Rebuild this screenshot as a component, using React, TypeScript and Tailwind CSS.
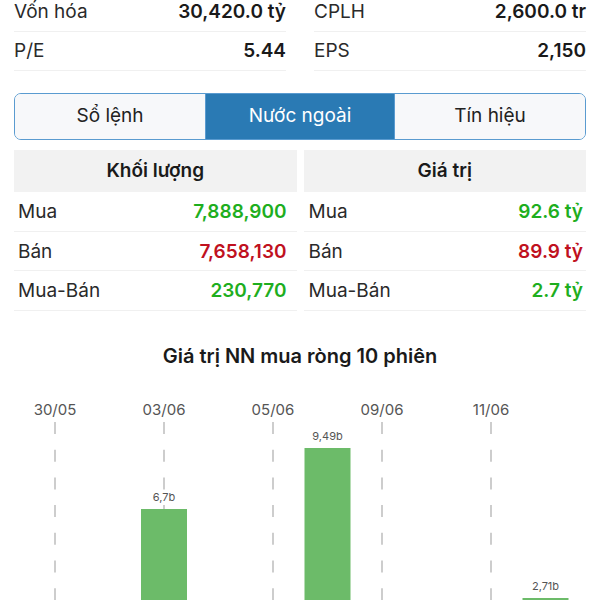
import React from "react";

type Pair = { label: string; value: string };

const topRows: Pair[][] = [
  [
    { label: "Vốn hóa", value: "30,420.0 tỷ" },
    { label: "CPLH", value: "2,600.0 tr" },
  ],
  [
    { label: "P/E", value: "5.44" },
    { label: "EPS", value: "2,150" },
  ],
];

type Row = { label: string; value: string; tone: "up" | "down" };

const volumeRows: Row[] = [
  { label: "Mua", value: "7,888,900", tone: "up" },
  { label: "Bán", value: "7,658,130", tone: "down" },
  { label: "Mua-Bán", value: "230,770", tone: "up" },
];

const valueRows: Row[] = [
  { label: "Mua", value: "92.6 tỷ", tone: "up" },
  { label: "Bán", value: "89.9 tỷ", tone: "down" },
  { label: "Mua-Bán", value: "2.7 tỷ", tone: "up" },
];

const tabs = ["Sổ lệnh", "Nước ngoài", "Tín hiệu"];

const StatTable: React.FC<{ title: string; rows: Row[]; right?: boolean }> = ({ title, rows, right }) => (
  <div>
    <div className="flex h-[42px] items-center justify-center bg-[#f2f2f2] text-[19px] font-semibold text-[#1a1a1a]">
      {title}
    </div>
    {rows.map((r) => (
      <div
        key={r.label}
        className={
          right
            ? "flex h-[39.5px] items-center justify-between border-b border-[#f0f0f0] pt-[2px] pl-[5px] pr-[3px] text-[19px]"
            : "flex h-[39.5px] items-center justify-between border-b border-[#f0f0f0] pt-[2px] pl-[4px] pr-[10px] text-[19px]"
        }
      >
        <span className="text-[#2a2a2a]">{r.label}</span>
        <span className={r.tone === "up" ? "font-semibold text-[#1eae1e]" : "font-semibold text-[#c0111e]"}>
          {r.value}
        </span>
      </div>
    ))}
  </div>
);

const dates = ["30/05", "03/06", "05/06", "09/06", "11/06"];

// bar tops in page pixels, scale ~22px per tỷ
const bars = [
  { x: 164, top: 508, label: "6,7b" },
  { x: 327.5, top: 447, label: "9,49b" },
  { x: 545.5, top: 597, label: "2,71b" },
];

const NetBuyChart: React.FC = () => {
  const y0 = 395;
  return (
    <svg width={600} height={205} className="block" style={{ fontFamily: "Inter, 'Noto Sans', sans-serif" }}>
      {dates.map((d, i) => {
        const x = 55 + 109 * i;
        return (
          <g key={d}>
            <text x={x} y={18.5} textAnchor="middle" fontSize={15} fill="#555">
              {d}
            </text>
            <line x1={x} x2={x} y1={26} y2={205} stroke="#bdbdbd" strokeWidth={1.5} strokeDasharray="12 15.7" />
          </g>
        );
      })}
      {bars.map((b) => (
        <g key={b.label}>
          <rect x={b.x - 23} y={b.top - y0} width={46} height={300} fill="#6cbb69" />
          <text x={b.x} y={b.top - y0 - 8} textAnchor="middle" fontSize={11} fill="#555">
            {b.label}
          </text>
        </g>
      ))}
    </svg>
  );
};

export default function App() {
  return (
    <div className="h-[600px] w-[600px] overflow-hidden bg-white font-['Inter','Noto_Sans',sans-serif]">
      <div className="-mt-[7px] grid grid-cols-2 gap-x-[28px] px-[14px]">
        {topRows.flat().map((p) => (
          <div
            key={p.label}
            className="flex h-[39px] items-center justify-between border-b border-[#f0f0f0] text-[19px]"
          >
            <span className="text-[#2a2a2a]">{p.label}</span>
            <span className="font-semibold text-[#1a1a1a]">{p.value}</span>
          </div>
        ))}
      </div>

      <div className="mx-[14px] mt-[22px] grid h-[47px] grid-cols-3 overflow-hidden rounded-[7px] border-[1.5px] border-[#5a9bd0] text-[19px]">
        {tabs.map((t, i) => (
          <div
            key={t}
            className={
              i === 1
                ? "flex items-center justify-center border-x border-[#5a9bd0] bg-[#2a7ab4] text-white"
                : "flex items-center justify-center bg-[#f7f8fa] text-[#222]"
            }
          >
            {t}
          </div>
        ))}
      </div>

      <div className="mx-[14px] mt-[10px] grid grid-cols-2 gap-x-[7px]">
        <StatTable title="Khối lượng" rows={volumeRows} />
        <StatTable title="Giá trị" rows={valueRows} right />
      </div>

      <div className="mt-[33px] text-center text-[20px] leading-[24px] font-semibold text-[#1a1a1a]">
        Giá trị NN mua ròng 10 phiên
      </div>
      <div className="mt-[28px]">
        <NetBuyChart />
      </div>
    </div>
  );
}
